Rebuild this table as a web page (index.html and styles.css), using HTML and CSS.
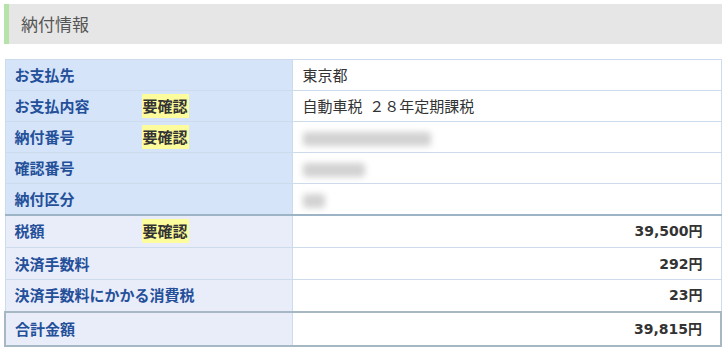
FILE: index.html
```html
<!DOCTYPE html>
<html lang="ja">
<head>
<meta charset="utf-8">
<link rel="stylesheet" href="styles.css">
</head>
<body>
<div class="page">
  <h2 class="heading">納付情報</h2>
  <table class="info">
    <tbody class="sec-a">
      <tr><th><span class="lbl">お支払先</span></th><td>東京都</td></tr>
      <tr><th><span class="lbl">お支払内容</span><span class="badge">要確認</span></th><td>自動車税&nbsp;&nbsp;２８年定期課税</td></tr>
      <tr><th><span class="lbl">納付番号</span><span class="badge">要確認</span></th><td><span class="blur w1"></span></td></tr>
      <tr><th><span class="lbl">確認番号</span></th><td><span class="blur w2"></span></td></tr>
      <tr><th><span class="lbl">納付区分</span></th><td><span class="blur w3"></span></td></tr>
    </tbody>
    <tbody class="sec-b">
      <tr><th><span class="lbl">税額</span><span class="badge">要確認</span></th><td class="num">39,500円</td></tr>
      <tr><th><span class="lbl">決済手数料</span></th><td class="num">292円</td></tr>
      <tr><th><span class="lbl">決済手数料にかかる消費税</span></th><td class="num">23円</td></tr>
      <tr class="total"><th><span class="lbl">合計金額</span></th><td class="num">39,815円</td></tr>
    </tbody>
  </table>
</div>
</body>
</html>
```
FILE: styles.css
```css
* { box-sizing: border-box; }
html, body { margin: 0; padding: 0; background: #fff; }
body { font-family: "Noto Sans CJK JP", "Noto Sans", sans-serif; color: #333; }
.page { padding: 4px 6px 0 4px; }
.heading {
  margin: 0;
  height: 40px;
  background: #e6e6e6;
  border-left: 5px solid #b6e4a8;
  font-size: 17px;
  font-weight: normal;
  color: #555;
  line-height: 40px;
  padding-left: 12px;
}
.info {
  margin-top: 15px;
  width: 100%;
  border-collapse: collapse;
  font-size: 15px;
  line-height: 18px;
}
.info th, .info td {
  height: 31px;
  padding: 0 9px;
  border: 1px solid #cddcec;
  vertical-align: middle;
}
.sec-b th, .sec-b td { height: 32px; }
.info th {
  width: 287px;
  text-align: left;
  color: #24509a;
  font-weight: bold;
  white-space: nowrap;
}
.sec-a th { background: #d5e4f8; }
.sec-b th { background: #e9ecf9; }
.sec-b tr:first-child th, .sec-b tr:first-child td { border-top: 2px solid #9db4c6; height: 33px; }
.lbl { display: inline-block; min-width: 127px; }
.badge {
  display: inline-block;
  background: #fdfc9c;
  color: #333;
  padding: 3px 1px;
  line-height: 18px;
}
.info td { color: #333; background: #fff; padding-left: 10px; }
.num {
  text-align: right;
  font-weight: bold;
  font-size: 14px;
  font-family: "DejaVu Sans", "Noto Sans CJK JP", sans-serif;
  padding-right: 18px !important;
}
.total th, .total td { border: 2px solid #a5b8c4; height: 34px; }
.total th { border-right: 1px solid #cddcec; }
.total td { border-left: 1px solid #cddcec; }
.blur {
  display: inline-block;
  height: 14px;
  background: #d2d2d2;
  filter: blur(3px);
  vertical-align: middle;
  border-radius: 3px;
}
.w1 { width: 128px; }
.w2 { width: 62px; }
.w3 { width: 22px; }
```
